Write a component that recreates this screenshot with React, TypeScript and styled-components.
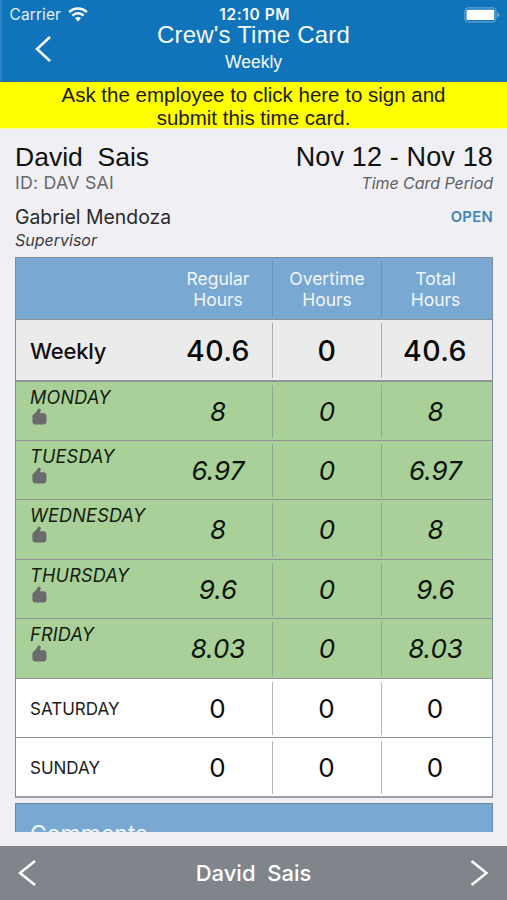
import React from "react";
import styled, { createGlobalStyle } from "styled-components";

const GlobalStyle = createGlobalStyle`
  * { box-sizing: border-box; }
  html, body { margin: 0; padding: 0; background: #efeff4; }
`;

const SF = `Inter, "Liberation Sans", sans-serif`;
const HELVETICA = `"Liberation Sans", Arial, sans-serif`;

type TextProps = {
  $size: number;
  $line: number;
  $font?: string;
  $track?: number;
  $weight?: number;
  $color?: string;
  $italic?: boolean;
};

const Text = styled.span<TextProps>`
  display: block;
  white-space: pre;
  font-family: ${(p) => p.$font ?? SF};
  font-size: ${(p) => p.$size}px;
  line-height: ${(p) => p.$line}px;
  letter-spacing: ${(p) => p.$track ?? 0}px;
  font-weight: ${(p) => p.$weight ?? 400};
  font-style: ${(p) => (p.$italic ? "italic" : "normal")};
  color: ${(p) => p.$color ?? "#111"};
`;

const Screen = styled.div`
  display: flex;
  flex-direction: column;
  width: 507px;
  height: 900px;
  overflow: hidden;
  background: #efeff4;
`;

const Header = styled.header`
  height: 82px;
  flex: none;
  background: #1074ba;
  border-left: 2px solid #2c83c2;
  border-bottom: 1px solid #2d6b90;
`;

const StatusBar = styled.div`
  display: grid;
  grid-template-columns: 1fr auto 1fr;
  align-items: center;
  height: 24px;
  padding: 5px 7px 0 7.5px;
`;

const Carrier = styled.div`
  display: flex;
  align-items: center;
  gap: 7px;
`;

const BatterySlot = styled.div`
  display: flex;
  justify-content: flex-end;
`;

const NavBar = styled.div`
  display: grid;
  grid-template-columns: 60px 1fr 62px;
  height: 57px;
`;

const BackButton = styled.button`
  display: flex;
  align-items: flex-start;
  padding: 11px 0 0 33px;
  border: 0;
  background: none;
`;

const Titles = styled.div`
  display: flex;
  flex-direction: column;
  align-items: center;
  margin-top: -1px;
`;

const Banner = styled.div`
  display: flex;
  flex: none;
  flex-direction: column;
  align-items: center;
  height: 47px;
  padding-top: 1px;
  background: #ffff00;
  border-bottom: 1px solid #f6f69a;
`;

const Content = styled.main`
  height: 703px;
  flex: none;
  overflow: hidden;
  padding: 14px 14px 0 15px;
`;

const InfoRow = styled.div<{ $height: number }>`
  display: flex;
  justify-content: space-between;
  height: ${(p) => p.$height}px;
`;

const InfoColumn = styled.div<{ $right?: boolean }>`
  display: flex;
  flex-direction: column;
  align-items: ${(p) => (p.$right ? "flex-end" : "flex-start")};
`;

const Table = styled.section`
  width: 478px;
  border: 1px solid #7e8c98;
  border-width: 1px 1px 2px;
  border-bottom-color: #9b9ea3;
`;

const Row = styled.div<{ $bg: string; $height: number; $line?: number }>`
  display: grid;
  grid-template-columns: 148px 109px 109px 110px;
  height: ${(p) => p.$height}px;
  background: ${(p) => p.$bg};
  border-bottom: ${(p) => p.$line ?? 0}px solid #8b9497;
`;

const LabelCell = styled.div<{ $top: number }>`
  padding: ${(p) => p.$top}px 0 0 14px;
`;

const Cell = styled.div<{ $divider?: string; $end?: number; $drop?: number }>`
  display: flex;
  flex-direction: column;
  align-items: center;
  justify-content: center;
  margin: 3px 0 2px;
  padding-top: ${(p) => p.$drop ?? 0}px;
  padding-right: ${(p) => p.$end ?? 0}px;
  border-right: ${(p) => (p.$divider ? `1px solid ${p.$divider}` : "0")};
`;

const Comments = styled.section`
  width: 478px;
  height: 60px;
  margin-top: 5px;
  padding: 16px 14px;
  border: 1px solid #70879b;
  background: #79a8d3;
`;

const Footer = styled.footer`
  display: flex;
  flex: none;
  align-items: center;
  justify-content: space-between;
  height: 54px;
  margin-top: 14px;
  padding: 0 18px 0 18px;
  background: #80858b;
`;

const ThumbSlot = styled.div`
  padding-left: 2px;
  margin-top: -1px;
  line-height: 0;
`;

const Chevron = ({ right, width = 16 }: { right?: boolean; width?: number }) => (
  <svg width={width + 3} height="28" viewBox={`0 0 ${width + 3} 28`} fill="none">
    <path
      d={
        right
          ? `M1.5 2L${width + 0.5} 14L1.5 26`
          : `M${width + 1} 2L2 14L${width + 1} 26`
      }
      stroke="#fff"
      strokeWidth="2.5"
    />
  </svg>
);

const Wifi = () => (
  <svg width="20" height="15" viewBox="0 0 20 15" fill="none" stroke="#fff">
    <path d="M1.2 5.2C6 .2 14 .2 18.8 5.2" strokeWidth="2.5" />
    <path d="M4.4 8.6C7.5 5.5 12.5 5.5 15.6 8.6" strokeWidth="2.4" />
    <path d="M7 11.3C8.7 9.7 11.3 9.7 13 11.3L10 14.4Z" fill="#fff" stroke="none" />
  </svg>
);

const Battery = () => (
  <svg width="36" height="16" viewBox="0 0 36 16">
    <rect x=".9" y=".9" width="31" height="14" rx="3" fill="none" stroke="#75afd8" />
    <rect x="2.5" y="2.7" width="27.8" height="10.4" rx="1.2" fill="#fff" />
    <path d="M33.4 5.6c2.5.7 2.5 4 0 4.8Z" fill="#75afd8" />
  </svg>
);

const Thumb = () => (
  <svg width="15" height="17" viewBox="0 0 15 17" fill="#696b6c">
    <path d="M.4 8.6Q.4 6.7 2.3 5.8Q4 4.6 5.7 1.5Q6.7-.1 8 .7Q9.1 1.5 8.6 3.3L7.9 5.2H12Q14.4 5.2 14.4 7.7V13.6Q14.4 16.4 11.6 16.4H3.2Q.4 16.4.4 13.6Z" />
  </svg>
);

const columns = ["Regular", "Overtime", "Total"];

const days = [
  { name: "MONDAY", regular: "8", overtime: "0", total: "8", height: 59 },
  { name: "TUESDAY", regular: "6.97", overtime: "0", total: "6.97", height: 59 },
  { name: "WEDNESDAY", regular: "8", overtime: "0", total: "8", height: 60 },
  { name: "THURSDAY", regular: "9.6", overtime: "0", total: "9.6", height: 59 },
  { name: "FRIDAY", regular: "8.03", overtime: "0", total: "8.03", height: 60 },
];

const weekend = [
  { name: "SATURDAY", height: 59, line: 1 },
  { name: "SUNDAY", height: 58, line: 0 },
];

export default function App() {
  return (
    <>
      <GlobalStyle />
      <Screen>
        <Header>
          <StatusBar>
            <Carrier>
              <Text $size={15.5} $line={15} $color="#e4f1fa" $track={0.1}>Carrier</Text>
              <Wifi />
            </Carrier>
            <Text $size={15.5} $line={15} $color="#f2f8fc" $weight={600} $track={0.6}>12:10 PM</Text>
            <BatterySlot><Battery /></BatterySlot>
          </StatusBar>
          <NavBar>
            <BackButton aria-label="Back"><Chevron width={14} /></BackButton>
            <Titles>
              <Text $font={HELVETICA} $size={24} $line={24} $track={0.2} $color="#f5faff">Crew's Time Card</Text>
              <Text $font={HELVETICA} $size={17.5} $line={30} $color="#f5faff">Weekly</Text>
            </Titles>
          </NavBar>
        </Header>
        <Banner>
          <Text $font={HELVETICA} $size={20.5} $line={23} $color="#1c1c00">Ask the employee to click here to sign and</Text>
          <Text $font={HELVETICA} $size={20.5} $line={23} $color="#1c1c00">submit this time card.</Text>
        </Banner>
        <Content>
          <InfoRow $height={62}>
            <InfoColumn>
              <Text $font={HELVETICA} $size={26.5} $line={29}>David  Sais</Text>
              <Text $size={17.8} $line={22} $color="#67676b" $track={0.2}>ID: DAV SAI</Text>
            </InfoColumn>
            <InfoColumn $right>
              <Text $font={HELVETICA} $size={27} $line={29} $track={0.15}>Nov 12 - Nov 18</Text>
              <Text $size={16} $line={22} $italic $color="#606064" $track={-0.05}>Time Card Period</Text>
            </InfoColumn>
          </InfoRow>
          <InfoRow $height={52}>
            <InfoColumn>
              <Text $size={19.4} $line={24} $color="#2a2a2d">Gabriel Mendoza</Text>
              <Text $size={16} $line={23} $italic $color="#3c3c40">Supervisor</Text>
            </InfoColumn>
            <InfoColumn $right>
              <Text $size={14.8} $line={25} $weight={600} $color="#4385b5" $track={0.3}>OPEN</Text>
            </InfoColumn>
          </InfoRow>
          <Table>
            <Row $bg="#79a8d3" $height={62} $line={1}>
              <LabelCell $top={0} />
              {columns.map((name, i) => (
                <Cell key={name} $divider={i < 2 ? "#6b93b9" : undefined} $end={i === 2 ? 3 : 0}>
                  <Text $size={17.5} $line={21} $color="#f1f7fc">{name}</Text>
                  <Text $size={17.5} $line={21} $color="#f1f7fc">Hours</Text>
                </Cell>
              ))}
            </Row>
            <Row $bg="#ebebeb" $height={62} $line={2}>
              <LabelCell $top={17}>
                <Text $size={22} $line={28} $weight={500} $track={-0.2}>Weekly</Text>
              </LabelCell>
              {["40.6", "0", "40.6"].map((v, i) => (
                <Cell key={i} $divider={i < 2 ? "#a9adb1" : undefined} $end={i === 2 ? 4 : 0} $drop={1}>
                  <Text $size={28.5} $line={34} $weight={500} $color="#0a0a0a" $track={0.4}>{v}</Text>
                </Cell>
              ))}
            </Row>
            {days.map((d) => (
              <Row key={d.name} $bg="#a8d098" $height={d.height} $line={1}>
                <LabelCell $top={4}>
                  <Text $size={18} $line={23} $italic $track={0.25} $color="#14200f">{d.name}</Text>
                  <ThumbSlot><Thumb /></ThumbSlot>
                </LabelCell>
                {[d.regular, d.overtime, d.total].map((v, i) => (
                  <Cell key={i} $divider={i < 2 ? "#8fa995" : undefined} $end={i === 2 ? 3 : 0}>
                    <Text $size={26} $line={32} $italic $color="#0c1408">{v}</Text>
                  </Cell>
                ))}
              </Row>
            ))}
            {weekend.map((d) => (
              <Row key={d.name} $bg="#ffffff" $height={d.height} $line={d.line}>
                <LabelCell $top={18.5}>
                  <Text $size={17} $line={23} $color="#1c1c1c">{d.name}</Text>
                </LabelCell>
                {[0, 1, 2].map((i) => (
                  <Cell key={i} $divider={i < 2 ? "#b4b7ba" : undefined} $end={i === 2 ? 4 : 1}>
                    <Text $size={26} $line={31} $color="#0c0c0c">0</Text>
                  </Cell>
                ))}
              </Row>
            ))}
          </Table>
          <Comments>
            <Text $size={23} $line={28} $color="#eef5fb">Comments</Text>
          </Comments>
        </Content>
        <Footer>
          <Chevron />
          <Text $size={22} $line={28} $weight={500} $color="#fff">David  Sais</Text>
          <Chevron right />
        </Footer>
      </Screen>
    </>
  );
}
